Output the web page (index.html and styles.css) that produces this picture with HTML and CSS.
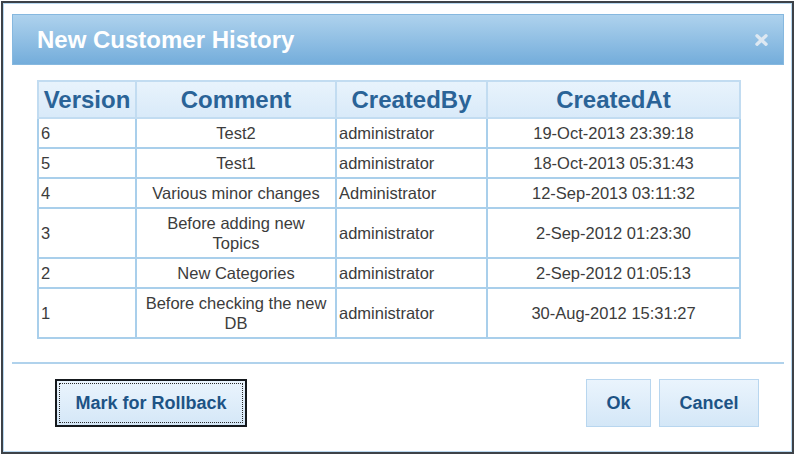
FILE: index.html
```html
<!DOCTYPE html>
<html>
<head>
<meta charset="utf-8">
<link rel="stylesheet" href="styles.css">
</head>
<body>
<div class="window">
  <div class="frame">
    <div class="titlebar">
      <span class="title">New Customer History</span>
      <svg class="close" width="13" height="12" viewBox="0 0 13 12"><path d="M2 1.8 L11 10.2 M11 1.8 L2 10.2" stroke="#dde8f2" stroke-width="3.4" stroke-linecap="round"/></svg>
    </div>
    <div class="content">
      <table class="grid">
        <colgroup>
          <col class="c1"><col class="c2"><col class="c3"><col class="c4">
        </colgroup>
        <thead>
          <tr><th>Version</th><th>Comment</th><th>CreatedBy</th><th>CreatedAt</th></tr>
        </thead>
        <tbody>
          <tr><td class="left">6</td><td class="mid">Test2</td><td class="left">administrator</td><td class="mid">19-Oct-2013 23:39:18</td></tr>
          <tr><td class="left">5</td><td class="mid">Test1</td><td class="left">administrator</td><td class="mid">18-Oct-2013 05:31:43</td></tr>
          <tr><td class="left">4</td><td class="mid">Various minor changes</td><td class="left">Administrator</td><td class="mid">12-Sep-2013 03:11:32</td></tr>
          <tr><td class="left">3</td><td class="mid">Before adding new<br>Topics</td><td class="left">administrator</td><td class="mid">2-Sep-2012 01:23:30</td></tr>
          <tr><td class="left">2</td><td class="mid">New Categories</td><td class="left">administrator</td><td class="mid">2-Sep-2012 01:05:13</td></tr>
          <tr><td class="left">1</td><td class="mid">Before checking the new<br>DB</td><td class="left">administrator</td><td class="mid">30-Aug-2012 15:31:27</td></tr>
        </tbody>
      </table>
    </div>
    <div class="divider"></div>
    <div class="footer">
      <button class="btn btn-focus btn-rollback">Mark for Rollback</button>
      <div class="actions">
        <button class="btn btn-ok">Ok</button>
        <button class="btn btn-cancel">Cancel</button>
      </div>
    </div>
  </div>
</div>
</body>
</html>
```
FILE: styles.css
```css
html, body {
  margin: 0;
  padding: 0;
  background: #ffffff;
  font-family: "Liberation Sans", Arial, sans-serif;
}

.window {
  margin: 1px 0 0 1px;
  width: 793px;
  height: 453px;
  box-sizing: border-box;
  border: 2px solid #3d4248;
}

.frame {
  height: 100%;
  box-sizing: border-box;
  border: 1px solid #b9d8f0;
  padding: 10px 7px 0 8px;
  background: #ffffff;
}

.titlebar {
  height: 51px;
  box-sizing: border-box;
  border: 1px solid #86b8df;
  background: linear-gradient(#aed2ed, #74addb);
  display: flex;
  align-items: center;
  justify-content: space-between;
  padding: 0 15px 0 24px;
}

.title {
  color: #ffffff;
  font-weight: bold;
  font-size: 24px;
}

.close {
  display: block;
}

.content {
  padding: 15px 0 0 25px;
}

.grid {
  border-collapse: collapse;
  width: 702px;
  table-layout: fixed;
  border: 2px solid #a9cfeb;
}

.c1 { width: 98px; }
.c2 { width: 200px; }
.c3 { width: 151px; }
.c4 { width: 253px; }

.grid th {
  border: 2px solid #c2dcf1;
  background: linear-gradient(#e8f3fc, #d9eaf9);
  color: #2a6397;
  font-weight: bold;
  font-size: 24px;
  line-height: 29px;
  padding: 3px 0;
  text-align: center;
}

.grid thead tr {
  border-bottom: 2px solid #a9cfeb;
}

.grid td {
  border: 2px solid #a9cfeb;
  color: #3c3c3c;
  font-size: 16.5px;
  line-height: 20px;
  padding: 4px 2px;
  vertical-align: middle;
}

.grid td.left { text-align: left; }
.grid td.mid { text-align: center; }

.divider {
  height: 2px;
  background: #b0d2ec;
  margin-top: 23px;
}

.footer {
  display: flex;
  justify-content: space-between;
  padding: 15px 25px 0 43px;
}

.actions {
  display: flex;
  gap: 8px;
}

.btn {
  height: 48px;
  box-sizing: border-box;
  border: 1px solid #b8d6ef;
  background: linear-gradient(#eaf4fd, #d4e7f7);
  color: #1d5385;
  font-family: "Liberation Sans", Arial, sans-serif;
  font-weight: bold;
  font-size: 18px;
  padding: 0;
  cursor: pointer;
}

.btn-focus {
  border: 2px solid #15191d;
  outline: 1px dotted #2a2a2a;
  outline-offset: -5px;
}

.btn-rollback { width: 192px; }
.btn-ok { width: 65px; }
.btn-cancel { width: 100px; }
```
